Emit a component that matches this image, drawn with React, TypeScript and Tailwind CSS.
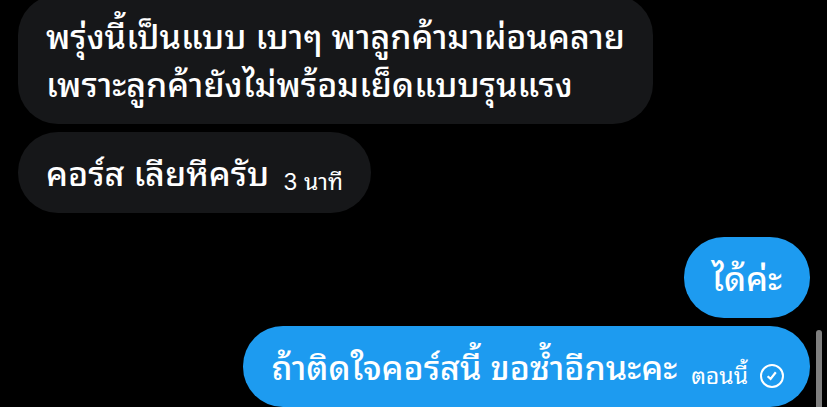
type Message = {
    id: number
    lines: string[]
    mine: boolean
    time?: string
    sent?: boolean
}

const received: Message[] = [
    { id: 1, lines: ["พรุ่งนี้เป็นแบบ เบาๆ พาลูกค้ามาผ่อนคลาย", "เพราะลูกค้ายังไม่พร้อมเย็ดแบบรุนแรง"], mine: false },
    { id: 2, lines: ["คอร์ส เลียหีครับ"], mine: false, time: "3 นาที" },
]

const replies: Message[] = [
    { id: 3, lines: ["ได้ค่ะ"], mine: true },
    { id: 4, lines: ["ถ้าติดใจคอร์สนี้ ขอซ้ำอีกนะคะ"], mine: true, time: "ตอนนี้", sent: true },
]

const SentIcon = () => (
    <svg viewBox="0 0 24 24" className="w-6 h-6" fill="none" stroke="currentColor" strokeWidth="2" aria-hidden="true">
        <circle cx="12" cy="12" r="11" />
        <path d="M7.6 12.2l3 2.7 5.2-6.6" strokeWidth="2.2" />
    </svg>
)

const Bubble = ({ message }: { message: Message }) => (
    <div
        className={`flex items-end rounded-[40px] pl-7 pt-[18px] pb-[15px] text-white ${
            message.mine ? 'self-end bg-[#1d9bf0]' : 'self-start bg-[#161719]'
        } ${message.sent ? 'pr-[26px]' : 'pr-7'}`}
    >
        <p className="text-[34px] leading-12 font-medium whitespace-nowrap">
            {message.lines.map((line) => (
                <span key={line} className="block">{line}</span>
            ))}
        </p>
        {message.time && (
            <span className="flex items-center gap-3 ml-3.5 text-[23px] leading-8 whitespace-nowrap">
                {message.time}
                {message.sent && <SentIcon />}
            </span>
        )}
    </div>
)

export default function App() {
    return (
        <main className="relative h-screen overflow-hidden bg-black font-['Inter','Noto_Sans_Thai_Looped','Loma',sans-serif]">
            <div className="flex flex-col gap-6 -mt-[5px] pl-[18px] pr-[17px]">
                <div className="flex flex-col gap-2">
                    {received.map((message) => (
                        <Bubble key={message.id} message={message} />
                    ))}
                </div>
                <div className="flex flex-col gap-2">
                    {replies.map((message) => (
                        <Bubble key={message.id} message={message} />
                    ))}
                </div>
            </div>
            {/* Scrollbar */}
            <div className="absolute right-[5px] top-[330px] bottom-0 w-[6px] rounded-t-full bg-[#7f7f7f]"></div>
        </main>
    )
}
